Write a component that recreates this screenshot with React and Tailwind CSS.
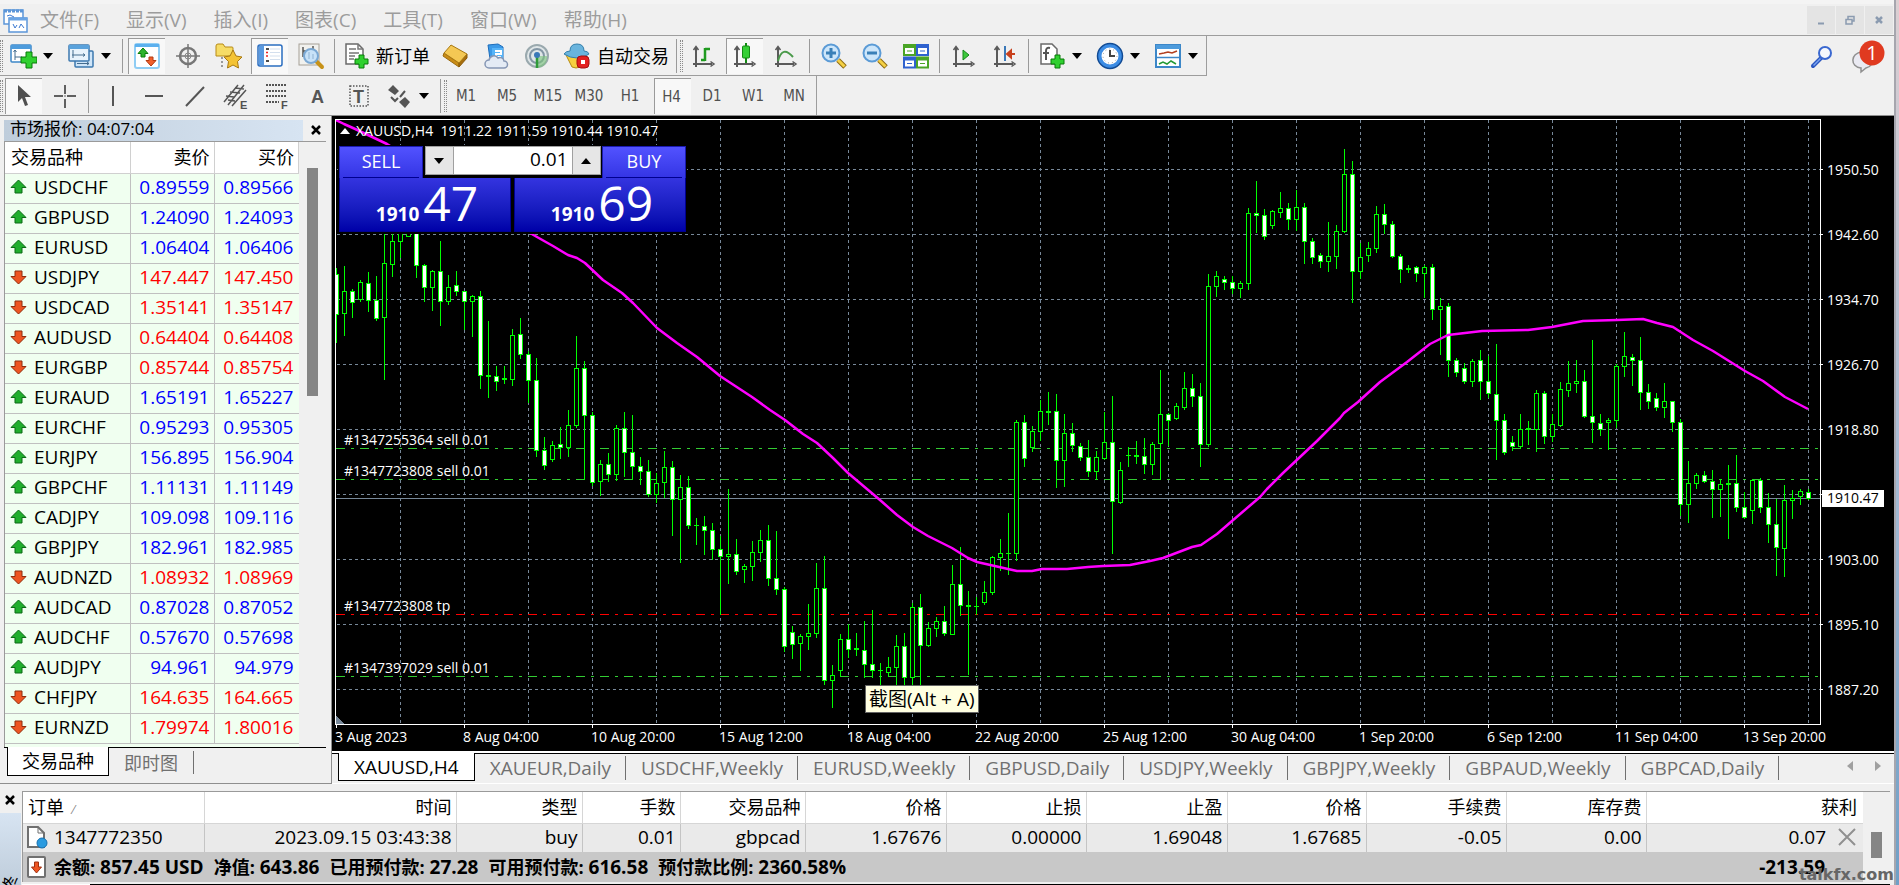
import React from "react";

const MENU = ["文件(F)", "显示(V)", "插入(I)", "图表(C)", "工具(T)", "窗口(W)", "帮助(H)"];

const QUOTES = [
  ["USDCHF", "0.89559", "0.89566", 1],
  ["GBPUSD", "1.24090", "1.24093", 1],
  ["EURUSD", "1.06404", "1.06406", 1],
  ["USDJPY", "147.447", "147.450", 0],
  ["USDCAD", "1.35141", "1.35147", 0],
  ["AUDUSD", "0.64404", "0.64408", 0],
  ["EURGBP", "0.85744", "0.85754", 0],
  ["EURAUD", "1.65191", "1.65227", 1],
  ["EURCHF", "0.95293", "0.95305", 1],
  ["EURJPY", "156.895", "156.904", 1],
  ["GBPCHF", "1.11131", "1.11149", 1],
  ["CADJPY", "109.098", "109.116", 1],
  ["GBPJPY", "182.961", "182.985", 1],
  ["AUDNZD", "1.08932", "1.08969", 0],
  ["AUDCAD", "0.87028", "0.87052", 1],
  ["AUDCHF", "0.57670", "0.57698", 1],
  ["AUDJPY", "94.961", "94.979", 1],
  ["CHFJPY", "164.635", "164.665", 0],
  ["EURNZD", "1.79974", "1.80016", 0],
];

// high, body top, body bottom, low, bearish
const CANDLES = [
  [268,274,315,343,1],[266,291,314,336,0],[289,291,303,318,1],[280,282,300,302,0],[272,283,301,312,1],
  [276,300,319,321,1],[226,263,318,380,0],[226,241,265,277,0],[226,228,242,258,0],[226,228,237,237,0],
  [226,228,266,278,1],[264,265,288,302,1],[270,271,288,311,0],[241,271,302,326,1],[275,287,302,305,0],
  [271,285,292,296,1],[291,291,302,330,1],[295,296,302,337,0],[291,296,376,389,1],[321,375,377,398,0],
  [366,376,382,391,1],[366,378,380,384,0],[329,335,380,386,0],[318,334,355,359,1],[351,354,381,403,1],
  [358,380,451,457,1],[437,450,466,470,1],[441,445,460,462,0],[427,444,448,459,1],[410,425,448,457,0],
  [336,368,426,428,0],[361,368,416,480,1],[412,415,483,486,1],[460,464,482,496,0],[453,464,475,482,1],
  [425,428,475,481,0],[412,428,453,477,1],[415,452,467,480,1],[457,466,472,485,1],[460,471,495,497,1],
  [473,483,495,503,0],[451,467,483,498,0],[461,467,500,536,1],[475,487,500,563,0],[476,487,526,529,1],
  [518,525,526,545,0],[516,526,531,555,1],[523,530,550,560,1],[536,549,557,615,1],[489,554,557,584,0],
  [539,554,572,575,1],[564,566,570,583,0],[541,552,567,581,0],[530,540,553,562,0],[525,540,579,586,1],
  [531,578,590,595,1],[587,589,647,652,1],[626,632,645,659,1],[634,636,644,671,0],[604,633,637,650,0],
  [563,588,634,638,0],[556,588,681,685,1],[665,675,681,708,0],[634,639,671,677,0],[624,639,650,658,1],
  [633,648,650,656,0],[621,650,665,678,1],[610,664,671,678,1],[663,670,671,685,0],[657,667,673,677,0],
  [635,646,668,685,0],[633,646,678,685,1],[603,607,678,685,0],[594,607,646,685,1],[622,628,646,647,0],
  [617,621,629,637,0],[606,621,634,636,1],[565,584,635,635,0],[547,584,606,616,1],[591,605,607,675,0],
  [597,606,607,615,0],[581,592,603,605,0],[556,557,593,595,0],[539,553,558,571,0],[513,553,554,575,0],
  [420,422,554,561,0],[415,422,459,467,1],[426,431,448,452,0],[400,411,432,441,0],[392,411,413,425,0],
  [394,411,461,488,1],[414,433,461,487,0],[423,433,446,452,1],[443,446,458,461,1],[440,457,472,477,1],
  [451,457,472,480,0],[412,442,459,460,0],[396,442,502,554,1],[462,470,503,504,0],[447,455,456,467,0],
  [441,455,457,464,0],[438,456,465,474,1],[442,444,465,475,0],[370,414,444,480,0],[413,414,421,446,1],
  [403,406,419,420,0],[372,388,408,410,0],[374,388,397,407,1],[383,396,445,467,1],[274,286,445,447,0],
  [271,276,287,297,0],[276,279,283,290,1],[276,282,289,294,1],[281,283,289,298,0],[208,213,284,290,0],
  [181,213,216,233,1],[209,215,237,240,1],[210,211,226,229,0],[192,208,213,218,0],[203,208,220,230,1],
  [190,207,220,231,0],[203,207,242,264,1],[238,241,258,264,1],[253,255,262,268,1],[222,256,262,272,0],
  [225,231,257,269,0],[149,174,232,233,0],[161,174,272,303,1],[243,257,272,279,0],[242,248,256,262,0],
  [206,214,249,253,0],[204,214,225,234,1],[221,224,257,258,1],[254,256,270,283,1],[265,268,270,273,0],
  [266,267,274,282,1],[265,267,274,298,0],[264,267,310,320,1],[298,306,310,355,0],[303,306,361,377,1],
  [358,360,373,377,1],[363,368,382,384,1],[359,361,382,387,0],[350,360,382,400,1],[356,381,394,398,1],
  [344,394,421,460,1],[414,420,453,455,1],[436,442,447,451,1],[414,429,447,449,0],[421,428,430,445,0],
  [390,393,430,452,0],[391,393,437,444,1],[414,424,437,442,0],[382,389,426,427,0],[361,383,391,397,0],
  [360,381,384,393,0],[370,381,417,418,1],[340,416,423,443,1],[414,423,430,436,1],[418,420,423,450,0],
  [364,366,421,428,0],[332,356,367,377,0],[354,357,361,386,1],[337,360,393,410,1],[384,392,402,409,1],
  [393,398,408,411,1],[383,401,408,418,0],[401,401,423,432,1],[419,422,505,516,1],[461,483,505,523,0],
  [473,475,484,489,0],[471,475,482,483,1],[470,481,490,518,1],[479,484,490,517,0],[465,483,485,539,0],
  [455,483,508,512,1],[492,507,518,519,1],[479,480,511,524,0],[478,480,508,513,1],[493,507,525,543,1],
  [499,524,548,576,1],[485,500,549,577,0],[490,498,501,519,0],[489,491,497,505,0],[489,492,499,500,1],
];

const MA =
  "336,120 344,124 353,128 368,135 387,144 530,233 537,237 553,246 568,255 577,258 585,263 603,280 622,293 633,303 657,328 677,343 697,357 720,376 752,397 770,410 785,420 803,434 817,443 833,458 848,473 880,500 897,515 913,527 928,536 952,548 968,558 977,562 1008,569 1017,571 1032,571 1042,569 1067,569 1088,567 1103,566 1130,565 1150,561 1163,558 1192,547 1201,545 1217,534 1232,521 1260,497 1267,489 1283,473 1317,441 1340,418 1344,413 1358,402 1380,382 1407,362 1430,344 1448,335 1482,331 1528,330 1552,327 1583,321 1617,320 1643,319 1657,323 1673,327 1693,340 1713,351 1745,371 1763,381 1785,397 1808,409";

const GRID_X = Array.from({ length: 23 }, (_, i) => 400 + i * 64);
const GRID_Y = Array.from({ length: 9 }, (_, i) => 169 + i * 65);
const PRICES = ["1950.50", "1942.60", "1934.70", "1926.70", "1918.80", "", "1903.00", "1895.10", "1887.20"];
const DATES = ["3 Aug 2023", "8 Aug 04:00", "10 Aug 20:00", "15 Aug 12:00", "18 Aug 04:00", "22 Aug 20:00", "25 Aug 12:00", "30 Aug 04:00", "1 Sep 20:00", "6 Sep 12:00", "11 Sep 04:00", "13 Sep 20:00"];
const CHART_TABS = ["XAUEUR,Daily", "USDCHF,Weekly", "EURUSD,Weekly", "GBPUSD,Daily", "USDJPY,Weekly", "GBPJPY,Weekly", "GBPAUD,Weekly", "GBPCAD,Daily"];

const ORDER_COLS = [
  ["时间", "2023.09.15 03:43:38"],
  ["类型", "buy"],
  ["手数", "0.01"],
  ["交易品种", "gbpcad"],
  ["价格", "1.67676"],
  ["止损", "0.00000"],
  ["止盈", "1.69048"],
  ["价格", "1.67685"],
  ["手续费", "-0.05"],
  ["库存费", "0.00"],
];

const ACCOUNT = [
  ["余额", "857.45 USD"],
  ["净值", "643.86"],
  ["已用预付款", "27.28"],
  ["可用预付款", "616.58"],
  ["预付款比例", "2360.58%"],
];

function Svg({ children, className = "w-7 h-7" }) {
  return <svg viewBox="0 0 28 28" className={`${className} shrink-0`} aria-hidden="true">{children}</svg>;
}

const Plus = ({ x, y }) => (
  <path d={`M${x + 4} ${y}h5v4h4v5h-4v4h-5v-4h-4v-5h4z`} fill="#2fd02f" stroke="#087a08" />
);
const Axes = () => (
  <g stroke="#5a5a5a" strokeWidth="2" fill="none">
    <path d="M6 25V6M3 22h19" />
    <path d="M3.500 8L6 4.500 8.500 8M20.500 19.500L24 22l-3.500 2.500" strokeWidth="1.500" />
  </g>
);

const NewChart = () => (
  <Svg>
    <rect x="2" y="3" width="20" height="17" rx="1" fill="#fff" stroke="#3c87c8" strokeWidth="1.500" />
    <rect x="2" y="3" width="20" height="4" fill="#4d9bdc" />
    <path d="M6 8v10M4.500 10L6 8l1.500 2M6 15h7" stroke="#456c8e" fill="none" />
    <path d="M17 10h6v5h5v6h-5v5h-6v-5h-5v-6h5z" fill="#2fd02f" stroke="#087a08" />
  </Svg>
);
const Profiles = () => (
  <Svg>
    <rect x="8" y="9" width="18" height="16" rx="1" fill="#cfe5f8" stroke="#3c78ae" strokeWidth="1.500" />
    <rect x="2" y="3" width="20" height="16" rx="1" fill="#e8f3fc" stroke="#3c78ae" strokeWidth="1.500" />
    <rect x="2" y="3" width="20" height="4" fill="#5aa2dc" />
    <path d="M6 8v8M5 13h13M16 11.500l2 1.500-2 1.500M10 21.500h12M20 20l2 1.500-2 1.500" stroke="#456c8e" fill="none" />
  </Svg>
);
const MarketIcon = () => (
  <Svg>
    <rect x="2" y="2" width="24" height="24" rx="2" fill="#fff" stroke="#8fcdf4" strokeWidth="2" />
    <rect x="2" y="2" width="24" height="3" fill="#5cb0ee" />
    <path d="M10 6l5 5.500h-3V15H8v-3.500H5z" fill="#2cb32c" stroke="#0b7d0b" />
    <path d="M18 24l-5-5.500h3V15h4v3.500h3z" fill="#f0602c" stroke="#b33a12" />
  </Svg>
);
const Target = () => (
  <Svg>
    <circle cx="14" cy="14" r="8" fill="none" stroke="#777" strokeWidth="2.500" />
    <path d="M14 2v24M2 14h24" stroke="#777" strokeWidth="1.500" />
    <circle cx="14" cy="14" r="3" fill="none" stroke="#888" />
  </Svg>
);
const Favorites = () => (
  <Svg>
    <path d="M1 4q0-2 2-2h5l2 3h7q1 0 1 1v8H1z" fill="#f6dc66" stroke="#b78a16" />
    <path d="M7 15v11" stroke="#444" strokeDasharray="2 2" />
    <path d="M18 8l3 6 6 1-4.500 4.500 1 6.500-5.500-3-5.500 3 1-6.500L9 15l6-1z" fill="#f4c334" stroke="#a87810" />
  </Svg>
);
const Panel = () => (
  <Svg>
    <rect x="2" y="3" width="24" height="21" rx="2" fill="#fff" stroke="#2a6dc0" strokeWidth="1.500" />
    <rect x="3" y="4" width="5" height="19" fill="#5a9ae0" />
    <path d="M10 7h3M10 19h3" stroke="#111" strokeWidth="1.500" />
    <path d="M10 10.500h2M10 14h2" stroke="#e22" strokeWidth="1.500" />
    <path d="M14 7h10M14 10.500h10M14 14h10M14 17.500h10" stroke="#d3dfee" />
  </Svg>
);
const Tester = () => (
  <Svg>
    <rect x="2" y="2" width="20" height="21" fill="#f1f1ee" stroke="#a6a096" />
    <path d="M6 5v10M6 9h3M16 4v10" stroke="#555" strokeWidth="1.500" />
    <path d="M19 19l6 6" stroke="#c79218" strokeWidth="4" strokeLinecap="round" />
    <circle cx="14" cy="14" r="7" fill="#c8e2f8" stroke="#7aa8d4" strokeWidth="2" />
    <path d="M12 10v7M16 12v5" stroke="#8fb2d2" />
  </Svg>
);
const NewOrder = () => (
  <Svg>
    <path d="M4 2h12l5 5v15H4z" fill="#fff" stroke="#6a6a6a" strokeWidth="1.500" />
    <path d="M16 2v5h5M7 7h7M7 11h10M7 14h6M7 17h5" fill="none" stroke="#777" strokeWidth="1.500" />
    <Plus x={13} y={13} />
  </Svg>
);
const Book = () => (
  <Svg>
    <path d="M2 14l16 11v-4L3 11z" fill="#c98c16" stroke="#9b6a0e" />
    <path d="M18 25l8-9v-4l-8 9z" fill="#a86e0c" stroke="#8a5a08" />
    <path d="M10 3l16 9-8 9L3 11z" fill="#f4c854" stroke="#a87810" />
  </Svg>
);
const Cloud = () => (
  <Svg>
    <path d="M6 3l10-1 5 3v12H8z" fill="#3c9ae8" stroke="#1d6dbb" />
    <path d="M10 6h11v12H10z" fill="#56b4f8" />
    <path d="M13 9h6v3h-5v3h5" stroke="#fff" strokeWidth="2" fill="none" />
    <path d="M7 26a4 4 0 010-8 5 5 0 019-2 4 4 0 016 3 3.500 3.500 0 010 7z" fill="#e4ebf5" stroke="#8596b4" strokeWidth="1.500" />
  </Svg>
);
const Signal = () => (
  <Svg>
    <circle cx="14" cy="14" r="11" fill="#dfe6e8" stroke="#9aa9ae" strokeWidth="2" />
    <circle cx="14" cy="14" r="7" fill="none" stroke="#8497a5" strokeWidth="2" />
    <path d="M14 14v12c6 0 11-5 10-12z" fill="#7cc47c" fillOpacity="0.6" />
    <path d="M14 14v12" stroke="#2f9a38" strokeWidth="2.500" />
    <circle cx="14" cy="13" r="3" fill="#3a78b8" />
  </Svg>
);
const AutoTrade = () => (
  <Svg>
    <path d="M3 13h20l-6 12q-4 2-8 0z" fill="#f6d040" stroke="#b48a14" />
    <path d="M7 9q0-7 7-7t7 7q4 0 5 3-5 4-12 4T1 12q2-3 6-3z" fill="#69b4dd" stroke="#3480ac" />
    <rect x="14" y="14" width="12" height="12" rx="4" fill="#e32020" stroke="#a50f0f" />
    <rect x="18" y="18" width="4" height="4" fill="#fff" />
  </Svg>
);
const BarChart = () => <Svg><Axes /><path d="M15 6v13M11 18h4M15 7h5" stroke="#1f9a1f" strokeWidth="2.500" fill="none" /></Svg>;
const CandleIcon = () => <Svg><Axes /><path d="M15 1v20" stroke="#138a13" strokeWidth="2" /><rect x="11.500" y="4" width="7" height="12" rx="1" fill="#35cf35" stroke="#138a13" /></Svg>;
const LineChart = () => <Svg><Axes /><path d="M6 19c3-11 8-12 15-4" stroke="#4a9a4a" strokeWidth="2" fill="none" /></Svg>;
const Zoom = ({ plus }) => (
  <Svg>
    <path d="M18 18l7 7" stroke="#8d6a10" strokeWidth="5" />
    <path d="M18 18l6.500 6.500" stroke="#f4d044" strokeWidth="3" />
    <circle cx="11" cy="11" r="8.500" fill="#cde6fa" stroke="#5b9bd6" strokeWidth="2" />
    <path d={plus ? "M11 6v10M6 11h10" : "M6 11h10"} stroke="#3a80b8" strokeWidth="3" />
  </Svg>
);
const Tiles = () => (
  <Svg>
    {[[1, 2, "#4aa526"], [14, 2, "#2f62cf"], [1, 14.5, "#2f62cf"], [14, 14.5, "#4aa526"]].map(([x, y, c]) => (
      <g key={`${x}-${y}`}>
        <rect x={x} y={y} width="13" height="12" fill={c} />
        <rect x={x + 2} y={y + 4} width="9" height="6" fill="#fff" />
        <path d={`M${x + 4} ${y + 7}h5`} stroke={c} />
      </g>
    ))}
  </Svg>
);
const AutoScroll = () => <Svg><Axes /><path d="M13 8v10l6-5z" fill="#3cc83c" stroke="#14871a" /></Svg>;
const ChartShift = () => <Svg><Axes /><path d="M14 4v15" stroke="#3a78b8" strokeWidth="2" /><path d="M24 12h-6M20 8.500L16 12l4 3.500z" stroke="#c8401c" strokeWidth="2" fill="#c8401c" /></Svg>;
const Indicators = () => (
  <Svg>
    <path d="M3 2h11l5 5v15H3z" fill="#fff" stroke="#6a6a6a" strokeWidth="1.500" />
    <path d="M12 6q-4-1-4 3v9M5 11h6" fill="none" stroke="#555" strokeWidth="2" />
    <Plus x={13} y={13} />
  </Svg>
);
const Clock = () => (
  <Svg>
    <circle cx="14" cy="14" r="10.500" fill="#fff" stroke="#3c8ce4" strokeWidth="4" />
    <circle cx="14" cy="14" r="12.500" fill="none" stroke="#124b94" strokeWidth="1.500" />
    <path d="M14 8v6h5" stroke="#444" strokeWidth="2" fill="none" />
    <circle cx="14" cy="14" r="7" fill="none" stroke="#999" strokeDasharray="1 3" />
  </Svg>
);
const Template = () => (
  <Svg>
    <rect x="2" y="3" width="24" height="22" fill="#fff" stroke="#3c87c8" strokeWidth="2" />
    <rect x="2" y="3" width="24" height="4" fill="#4d9bdc" />
    <path d="M2 15.500h24" stroke="#3c87c8" strokeWidth="1.500" />
    <path d="M5 12l5-1 4-1 4 1 5-2" stroke="#b24020" strokeWidth="1.500" fill="none" />
    <path d="M5 22l4-2 4 2 4-3 5 3" stroke="#259a35" strokeWidth="1.500" fill="none" />
  </Svg>
);

const CursorIcon = () => <Svg><path d="M8 3v17l4-4 3 8 3-1-3-8h6z" fill="#505050" /></Svg>;
const Cross = () => <Svg><path d="M14 3v9M14 17v9M3 14h9M16 14h9M14 13.500v1" stroke="#606060" strokeWidth="2" /></Svg>;
const VLine = () => <Svg><path d="M14 4v20" stroke="#555" strokeWidth="2" /></Svg>;
const HLine = () => <Svg><path d="M5 14h18" stroke="#555" strokeWidth="2" /></Svg>;
const Trend = () => <Svg><path d="M5 24L23 5" stroke="#555" strokeWidth="2" /></Svg>;
const Channel = () => (
  <Svg>
    <path d="M2 20L16 3M6 23L22 3M10 24L24 8M4 14l8 1M8 10l10 1M6 18l7 1M13 6l9 1" stroke="#555" strokeWidth="1.500" />
    <text x="18" y="27" fontSize="11" fontWeight="700" fill="#505050" fontFamily="Liberation Sans, sans-serif">E</text>
  </Svg>
);
const Fibo = () => (
  <Svg>
    <path d="M3 3h21M3 9h21M3 14h21M3 20h13" stroke="#555" strokeWidth="2" strokeDasharray="2 1" />
    <text x="18" y="27" fontSize="11" fontWeight="700" fill="#505050" fontFamily="Liberation Sans, sans-serif">F</text>
  </Svg>
);
const LetterA = () => <Svg><text x="7" y="21" fontSize="18" fontWeight="700" fill="#555" fontFamily="Liberation Sans, sans-serif">A</text></Svg>;
const LetterT = () => (
  <Svg>
    <rect x="5" y="4" width="18" height="20" fill="none" stroke="#555" strokeWidth="1.500" strokeDasharray="1.500 1.500" />
    <text x="8" y="21" fontSize="18" fontWeight="700" fill="#555" fontFamily="Liberation Sans, sans-serif">T</text>
  </Svg>
);
const Arrows = () => (
  <Svg>
    <path d="M8 3l6 6-4 4-7-5zM20 15l5 5-5 6-6-6z" fill="#555" />
    <path d="M6 15l4 4 3-3M15 15l5-6" stroke="#555" strokeWidth="2" fill="none" />
  </Svg>
);

function ToolButton({ label, icon: Icon, pressed, children }) {
  return (
    <button
      aria-label={label}
      className={pressed
        ? "flex items-center justify-center w-[37px] h-9 mx-[2px] bg-[#f8f8f8] border-t border-l border-[#9a9a9a] shrink-0"
        : "flex items-center justify-center w-[41px] h-9 shrink-0"}
    >
      {Icon ? <Icon /> : children}
    </button>
  );
}

function DropButton({ label, icon: Icon }) {
  return (
    <button aria-label={label} className="flex items-center gap-[6px] w-[58px] h-9 pl-[6px] shrink-0">
      <Icon />
      <Caret />
    </button>
  );
}

const Caret = () => (
  <svg viewBox="0 0 10 6" className="w-[10px] h-[6px] shrink-0" aria-hidden="true"><path d="M0 0h10L5 6z" fill="#000" /></svg>
);
const Grip = () => <div className="w-[3px] h-8 border-x border-dotted border-[#8a8a8a] shrink-0" />;
const Sep = () => <div className="w-px h-[34px] mx-[3px] bg-[#9a9a9a] shrink-0" />;

function QuoteArrow({ up }) {
  return (
    <svg viewBox="0 0 18 16" className="w-[18px] h-4 shrink-0" aria-hidden="true">
      {up
        ? <path d="M8.500 1l7.500 7.500h-4V14H5V8.500H1z" fill="#1fae2c" stroke="#0a6a14" />
        : <path d="M8.500 15L1 7.500h4V2h7v5.500h4z" fill="#ee5522" stroke="#8f2c0c" />}
    </svg>
  );
}

function MenuBar() {
  return (
    <header className="flex items-center h-9 border-t-4 border-t-[#f4f4f4] border-b border-b-[#9d9d9d] pl-[3px] pr-px">
      <svg viewBox="0 0 26 26" className="w-[26px] h-[26px] mr-[11px]" aria-hidden="true">
        <rect x="1" y="3" width="19" height="14" fill="#fff" stroke="#5b95d8" strokeWidth="1.500" />
        <path d="M1 4h19" stroke="#5b95d8" strokeWidth="3" strokeDasharray="3 1" />
        <rect x="6" y="11" width="18" height="14" fill="#fff" stroke="#5b95d8" strokeWidth="1.500" />
        <path d="M6 12h18" stroke="#6aa4e4" strokeWidth="3" />
        <path d="M10 17l2 4 2-3M16 21l2-4 3 4M4 9l3-1 4 2" stroke="#3a78d0" fill="none" />
      </svg>
      <nav className="flex gap-[27px] text-[19px] leading-7 text-[#9c9c9c]">
        {MENU.map((m) => <button key={m} className="whitespace-nowrap">{m}</button>)}
      </nav>
      <div className="flex gap-px ml-auto">
        <button aria-label="最小化" className="flex items-center justify-center w-7 h-7 bg-[#e4e4e4]">
          <svg viewBox="0 0 10 10" className="w-[10px] h-[10px]"><path d="M2 8.500h6" stroke="#8b9bb0" strokeWidth="2" /></svg>
        </button>
        <button aria-label="还原" className="flex items-center justify-center w-7 h-7 bg-[#e4e4e4]">
          <svg viewBox="0 0 10 10" className="w-[10px] h-[10px]"><path d="M3 4V1.500h6V6H7M1 4.500h6V9H1z" stroke="#8b9bb0" strokeWidth="1.500" fill="none" /></svg>
        </button>
        <button aria-label="关闭" className="flex items-center justify-center w-7 h-7 bg-[#e4e4e4]">
          <svg viewBox="0 0 10 10" className="w-[10px] h-[10px]"><path d="M2 2l6 6M8 2L2 8" stroke="#8b9bb0" strokeWidth="2.500" /></svg>
        </button>
      </div>
    </header>
  );
}

function Toolbars() {
  return (
    <div className="flex border-b border-[#8e8e8e]">
      <div className="flex flex-col min-w-0">
        <div className="flex items-center h-10 border-b border-r border-[#9d9d9d] text-lg">
          <Grip />
          <DropButton label="新图表" icon={NewChart} />
          <DropButton label="配置文件" icon={Profiles} />
          <Sep />
          <ToolButton label="市场报价" icon={MarketIcon} pressed />
          <ToolButton label="数据窗口" icon={Target} />
          <ToolButton label="导航" icon={Favorites} />
          <ToolButton label="终端" icon={Panel} pressed />
          <ToolButton label="策略测试" icon={Tester} />
          <Sep />
          <button className="flex items-center gap-[6px] h-9 px-1 whitespace-nowrap"><NewOrder />新订单</button>
          <ToolButton label="编辑器" icon={Book} />
          <ToolButton label="虚拟主机" icon={Cloud} />
          <ToolButton label="信号" icon={Signal} />
          <button className="flex items-center gap-[6px] h-9 pl-[6px] pr-1 whitespace-nowrap"><AutoTrade />自动交易</button>
          <Sep />
          <Grip />
          <ToolButton label="柱状图" icon={BarChart} />
          <ToolButton label="蜡烛图" icon={CandleIcon} pressed />
          <ToolButton label="折线图" icon={LineChart} />
          <Sep />
          <ToolButton label="放大"><Zoom plus /></ToolButton>
          <ToolButton label="缩小"><Zoom /></ToolButton>
          <ToolButton label="平铺" icon={Tiles} />
          <Sep />
          <ToolButton label="自动滚动" icon={AutoScroll} />
          <ToolButton label="图表平移" icon={ChartShift} />
          <Sep />
          <DropButton label="指标" icon={Indicators} />
          <DropButton label="时间周期" icon={Clock} />
          <DropButton label="模板" icon={Template} />
        </div>
        <div className="flex items-center self-start h-[39px] border-r border-[#9d9d9d] text-[15px] text-[#505050] font-['DejaVu_Sans_Condensed','DejaVu_Sans',sans-serif]">
          <Grip />
          <ToolButton label="光标" icon={CursorIcon} pressed />
          <ToolButton label="十字线" icon={Cross} />
          <Sep />
          <ToolButton label="垂直线" icon={VLine} />
          <ToolButton label="水平线" icon={HLine} />
          <ToolButton label="趋势线" icon={Trend} />
          <ToolButton label="通道" icon={Channel} />
          <ToolButton label="斐波纳契" icon={Fibo} />
          <ToolButton label="文字" icon={LetterA} />
          <ToolButton label="文字标签" icon={LetterT} />
          <DropButton label="箭头" icon={Arrows} />
          <Sep />
          <Grip />
          {["M1", "M5", "M15", "M30", "H1", "H4", "D1", "W1", "MN"].map((t) => (
            <ToolButton key={t} label={t} pressed={t === "H4"}><span className="pt-[2px] pr-[3px]">{t}</span></ToolButton>
          ))}
        </div>
      </div>
      <div className="flex gap-4 ml-auto pt-[3px] pr-2">
        <button aria-label="搜索" className="h-9">
          <svg viewBox="0 0 24 24" className="w-6 h-6">
            <path d="M3 21l8-8" stroke="#2a56c0" strokeWidth="4" strokeLinecap="round" />
            <path d="M3.500 20.500l7-7" stroke="#7ba4f0" strokeWidth="1.500" />
            <circle cx="15" cy="8" r="6" fill="#f6f8fc" stroke="#3a68d0" strokeWidth="2" />
          </svg>
        </button>
        <button aria-label="消息" className="h-9">
          <svg viewBox="0 0 36 34" className="w-9 h-[34px]">
            <path d="M12 12c12 0 14 14 4 16l-5 4v-4c-11-1-11-15 1-16z" fill="#eaeaf2" stroke="#909090" strokeWidth="1.500" />
            <circle cx="22" cy="13" r="12.500" fill="#e03a20" />
            <text x="22" y="20" textAnchor="middle" fontSize="20" fill="#fff">1</text>
          </svg>
        </button>
      </div>
    </div>
  );
}

function MarketWatch() {
  return (
    <aside className="flex flex-col w-[332px] shrink-0 pt-[3px] pb-[6px] pl-1 pr-[5px] border-r border-b border-[#8e8e8e]">
      <div className="flex items-center h-[22px]">
        <h2 className="w-[299px] h-[21px] pl-[6px] text-[17px] leading-[18px] bg-linear-to-r from-[#bfcddb] to-[#d7e4f2]">市场报价: 04:07:04</h2>
        <button aria-label="关闭" className="ml-2">
          <svg viewBox="0 0 10 10" className="w-[10px] h-[10px]"><path d="M1 1l8 8M9 1L1 9" stroke="#000" strokeWidth="2.500" /></svg>
        </button>
      </div>
      <div className="flex grow border-t border-l border-[#9a9a9a]">
        <div className="w-[294px] bg-[#f0fff0]">
          <table className="w-full table-fixed text-[19px] leading-6">
            <thead>
              <tr className="h-[31px] bg-white text-lg">
                <th className="w-[125px] pl-[6px] text-left font-normal border-r border-b border-[#d0d0d0]">交易品种</th>
                <th className="w-[84px] pr-1 text-right font-normal border-r border-b border-[#d0d0d0]">卖价</th>
                <th className="pr-1 text-right font-normal border-r border-b border-[#d0d0d0]">买价</th>
              </tr>
            </thead>
            <tbody>
              {QUOTES.map(([name, bid, ask, up]) => (
                <tr key={name} className={up ? "h-[30px] text-[#0000ff]" : "h-[30px] text-[#ff0000]"}>
                  <td className="p-0 pb-[2px] pl-[5px] border-r border-b border-[#c0c0c0]">
                    <span className="flex items-center gap-[6px] text-black"><QuoteArrow up={up} />{name}</span>
                  </td>
                  <td className="p-0 pb-[2px] pr-1 text-right border-r border-b border-[#c0c0c0]">{bid}</td>
                  <td className="p-0 pb-[2px] pr-[5px] text-right border-b border-[#c0c0c0]">{ask}</td>
                </tr>
              ))}
            </tbody>
          </table>
        </div>
        <div className="w-[27px] pt-[26px] pl-2"><div className="w-[11px] h-[228px] bg-[#858585]" /></div>
      </div>
      <div className="flex h-[30px] border-t border-black text-lg">
        <button className="h-[29px] w-[102px] ml-[3px] -mt-px bg-white border-x border-b border-black">交易品种</button>
        <button className="px-[15px] my-[3px] flex items-center text-[#707070] border-r border-[#707070]">即时图</button>
      </div>
    </aside>
  );
}

function TradePanel() {
  return (
    <div className="absolute top-[25px] left-[2px] flex flex-col w-[349px] p-px pb-[2px] bg-black text-white">
      <div className="flex justify-between h-8">
        <button className="w-[84px] text-lg leading-[26px] bg-linear-to-b from-[#5252ff] to-[#3434e4] border-x border-t border-[#1a1ab0]">
          <span className="block h-[30px] mx-[3px] border-b border-[#000090]">SELL</span>
        </button>
        <div className="flex w-[176px] h-[29px] border border-[#a0a0a0] bg-white text-black">
          <button aria-label="减少" className="flex items-center justify-center w-7 bg-[#e6e6e6] border-r border-[#a0a0a0]"><Caret /></button>
          <input aria-label="手数" defaultValue="0.01" className="w-0 grow pr-1 pb-px text-right text-[19px] outline-none" />
          <button aria-label="增加" className="flex items-center justify-center w-7 bg-[#e6e6e6] border-l border-[#a0a0a0]"><span className="rotate-180 flex"><Caret /></span></button>
        </div>
        <button className="w-[84px] text-lg leading-[26px] bg-linear-to-b from-[#5252ff] to-[#3434e4] border-x border-t border-[#1a1ab0]">
          <span className="block h-[30px] mx-[3px] border-b border-[#000090]">BUY</span>
        </button>
      </div>
      <div className="flex justify-between h-[54px]">
        {["47", "69"].map((pips) => (
          <button key={pips} className="flex items-baseline justify-center gap-1 w-[172px] pl-1 bg-linear-to-b from-[#3434e0] to-[#0000a8] border-x border-b border-[#000090]">
            <span className="text-[19px] font-bold">1910</span>
            <span className="text-[48px] leading-[50px]">{pips}</span>
          </button>
        ))}
      </div>
    </div>
  );
}

function OrderLabel({ className, children }) {
  return <span className={`absolute left-2 leading-4 whitespace-pre ${className}`}>{children}</span>;
}

function PriceChart() {
  return (
    <svg viewBox="336 120 1484 604" preserveAspectRatio="xMinYMin slice" shapeRendering="crispEdges" className="absolute inset-0 w-full h-full" role="img" aria-label="XAUUSD,H4">
      <g stroke="#778899" strokeDasharray="3 3">
        {GRID_X.map((x) => <path key={x} d={`M${x + 0.5} 120V724`} />)}
        {GRID_Y.map((y) => <path key={y} d={`M337 ${y + 0.5}H1820`} />)}
      </g>
      <g strokeDasharray="9 6 3 6" stroke="#32cd32">
        <path d="M336 448.500H1820" />
        <path d="M336 479.500H1820" />
        <path d="M336 614.500H1820" stroke="#ff0000" />
        <path d="M336 676.500H1820" />
      </g>
      <path d="M336 498.500H1820" stroke="#778899" />
      {CANDLES.map(([high, top, bottom, low, bear], i) => {
        const x = 336 + i * 8;
        return (
          <g key={i}>
            <rect x={x} y={high} width="1" height={low - high} fill="#00ff00" />
            <rect x={x - 2} y={top} width="5" height={bottom - top} fill="#00ff00" />
            {bottom - top > 2 && <rect x={x - 1} y={top + 1} width="3" height={bottom - top - 2} fill={bear ? "#fff" : "#000"} />}
          </g>
        );
      })}
      <polyline points={MA} fill="none" stroke="#ff00ff" strokeWidth="2.500" strokeLinejoin="round" shapeRendering="auto" />
      <path d="M336 716v8h8z" fill="#778899" />
    </svg>
  );
}

function ChartWindow() {
  return (
    <div className="flex flex-col grow min-w-0">
      <div className="flex flex-col grow bg-black text-white text-sm pt-[3px] pl-[3px]">
        <div className="flex grow">
          <div className="relative grow min-w-0 border border-white overflow-hidden">
            <PriceChart />
            <div className="relative flex items-center gap-[6px] h-[21px] pl-1 whitespace-pre">
              <svg viewBox="0 0 10 6" className="w-[10px] h-[6px]" aria-hidden="true"><path d="M0 6h10L5 0z" fill="#fff" /></svg>
              XAUUSD,H4  1911.22 1911.59 1910.44 1910.47
            </div>
            <TradePanel />
            <OrderLabel className="top-[312px]">#1347255364 sell 0.01</OrderLabel>
            <OrderLabel className="top-[343px]">#1347723808 sell 0.01</OrderLabel>
            <OrderLabel className="top-[478px]">#1347723808 tp</OrderLabel>
            <OrderLabel className="top-[540px]">#1347397029 sell 0.01</OrderLabel>
            <div role="tooltip" className="absolute top-[565px] left-[529px] px-[3px] h-7 text-[19px] leading-[26px] text-black bg-[#ffffe1] border border-[#646464] whitespace-nowrap">截图(Alt + A)</div>
          </div>
          <div className="relative w-[73px] shrink-0 pt-[18px]">
            {PRICES.map((p, i) => (
              <div key={i} className="flex items-center gap-1 h-[65px]"><span className="w-[2px] h-px bg-white" />{p}</div>
            ))}
            <div className="absolute top-[371px] left-px w-[62px] h-[17px] pl-[5px] leading-4 bg-white text-black">1910.47</div>
          </div>
        </div>
        <div className="flex h-[26px] overflow-hidden">
          {DATES.map((d) => (
            <div key={d} className="w-32 shrink-0 leading-[23px] whitespace-nowrap">
              <div className="w-px h-[3px] ml-px -mb-[3px] bg-white" />
              {d}
            </div>
          ))}
        </div>
      </div>
      <div className="h-[3px] bg-white border-b border-black" />
      <div className="flex items-start h-[30px] pl-[6px] border-b border-white text-[19px] text-[#707070]">
        <button className="h-7 px-[15px] leading-[26px] -mt-px bg-white text-black border-x border-b border-black whitespace-nowrap">XAUUSD,H4</button>
        {CHART_TABS.map((t) => (
          <button key={t} className="h-6 mt-[2px] pl-[15px] pr-[14px] leading-[22px] border-r border-[#707070] whitespace-nowrap">{t}</button>
        ))}
        <div className="flex gap-[22px] ml-auto pt-[7px] pr-[13px]">
          <button aria-label="向左"><svg viewBox="0 0 6 10" className="w-[6px] h-[10px]"><path d="M6 0v10L0 5z" fill="#a0a0a0" /></svg></button>
          <button aria-label="向右"><svg viewBox="0 0 6 10" className="w-[6px] h-[10px]"><path d="M0 0v10l6-5z" fill="#a0a0a0" /></svg></button>
        </div>
      </div>
    </div>
  );
}

function Terminal() {
  return (
    <section className="flex h-[101px] pt-[7px] pr-1">
      <div className="flex flex-col w-[22px] shrink-0">
        <button aria-label="关闭" className="h-[22px] pl-[5px] pb-[4px]">
          <svg viewBox="0 0 10 10" className="w-[10px] h-[10px]"><path d="M1 1l8 8M9 1L1 9" stroke="#000" strokeWidth="2.500" /></svg>
        </button>
        <div className="flex flex-col justify-end grow mr-px bg-linear-to-b from-[#d7e4f2] to-[#bfcddb] overflow-hidden">
          <span className="flex justify-end h-[9px] leading-5 text-base [writing-mode:vertical-rl] [text-orientation:sideways] rotate-180 overflow-hidden">终端</span>
        </div>
      </div>
      <div className="flex flex-col grow min-w-0">
        <div className="flex border-t border-l border-[#9a9a9a]">
          <table className="grow table-fixed w-0 text-[19px] leading-6">
            <colgroup>
              <col className="w-[181px]" />
              <col className="w-[252px]" />
              <col className="w-[126px]" />
              <col className="w-[98px]" />
              <col className="w-[125px]" />
              <col className="w-[141px]" />
              <col className="w-[140px]" />
              <col className="w-[141px]" />
              <col className="w-[139px]" />
              <col className="w-[140px]" />
              <col className="w-[140px]" />
              <col />
            </colgroup>
            <thead>
              <tr className="h-[31px] bg-white text-lg">
                <th className="pl-[5px] text-left font-normal border-r border-b border-[#d6d6d6]">订单 <span className="ml-1 text-xs text-[#808080]">⁄</span></th>
                {ORDER_COLS.map(([h], i) => <th key={i} className="pr-1 text-right font-normal border-r border-b border-[#d6d6d6]">{h}</th>)}
                <th className="pr-[6px] text-right font-normal border-b border-[#d6d6d6]">获利</th>
              </tr>
            </thead>
            <tbody>
              <tr className="h-[29px] bg-[#eaeaea]">
                <td className="p-0 pb-px pl-[3px] border-r border-[#c4c4c4]">
                  <span className="flex items-center gap-[6px]">
                    <svg viewBox="0 0 22 24" className="w-[22px] h-6 shrink-0" aria-hidden="true">
                      <path d="M2 2h10l6 6v14H2z" fill="#fff" stroke="#707070" strokeWidth="2" />
                      <path d="M12 2v6h6" fill="none" stroke="#707070" />
                      <circle cx="16" cy="18" r="5" fill="#2a9be0" stroke="#1570b0" />
                    </svg>
                    1347772350
                  </span>
                </td>
                {ORDER_COLS.map(([, v], i) => <td key={i} className="p-0 pb-[2px] pr-1 text-right border-r border-[#c4c4c4]">{v}</td>)}
                <td className="p-0 pb-[2px] pr-[7px]">
                  <span className="flex items-center justify-end gap-3">
                    0.07
                    <button aria-label="平仓"><svg viewBox="0 0 18 18" className="block w-[18px] h-[18px]"><path d="M1 1l16 16M17 1L1 17" stroke="#909090" strokeWidth="2" /></svg></button>
                  </span>
                </td>
              </tr>
              <tr className="h-[30px] bg-[#c8c8c8] font-bold">
                <td colSpan={11} className="p-0 pl-[3px]">
                  <span className="flex items-center gap-[10px] whitespace-nowrap">
                    <svg viewBox="0 0 22 24" className="w-[22px] h-6 -mr-1 shrink-0" aria-hidden="true">
                      <rect x="2" y="2" width="17" height="20" rx="1" fill="#fff" stroke="#707070" strokeWidth="2" />
                      <path d="M10.500 18l-5-6h3V7h4v5h3z" fill="#ee5522" stroke="#a03010" />
                    </svg>
                    {ACCOUNT.map(([label, value]) => (
                      <span key={label}><span className="text-lg leading-6">{label}:</span> {value}</span>
                    ))}
                  </span>
                </td>
                <td className="p-0 pr-[38px] text-right">-213.59</td>
              </tr>
            </tbody>
          </table>
          <div className="w-[27px] pt-10 pl-2"><div className="w-[11px] h-[26px] bg-[#858585]" /></div>
        </div>
        <div className="flex grow items-end"><span className="w-[68px] h-px bg-white" /><span className="grow h-px bg-black" /></div>
      </div>
    </section>
  );
}

export default function App() {
  return (
    <div className="relative flex min-h-screen overflow-hidden text-black font-['Open_Sans','Noto_Sans_CJK_SC',sans-serif]">
      <div className="flex flex-col grow min-w-0 bg-[#f0f0f0] border-r-2 border-[#a6a6ae]">
        <MenuBar />
        <Toolbars />
        <main className="flex grow">
          <MarketWatch />
          <ChartWindow />
        </main>
        <Terminal />
      </div>
      <div className="w-[3px] shrink-0 bg-linear-to-b from-[#dccfd2] via-[#a9bcd4] to-[#6f9fc6]" />
      <div className="absolute right-[5px] bottom-0 text-base leading-5 font-bold text-[#666] font-['DejaVu_Sans',sans-serif]">talkfx.com</div>
    </div>
  );
}
